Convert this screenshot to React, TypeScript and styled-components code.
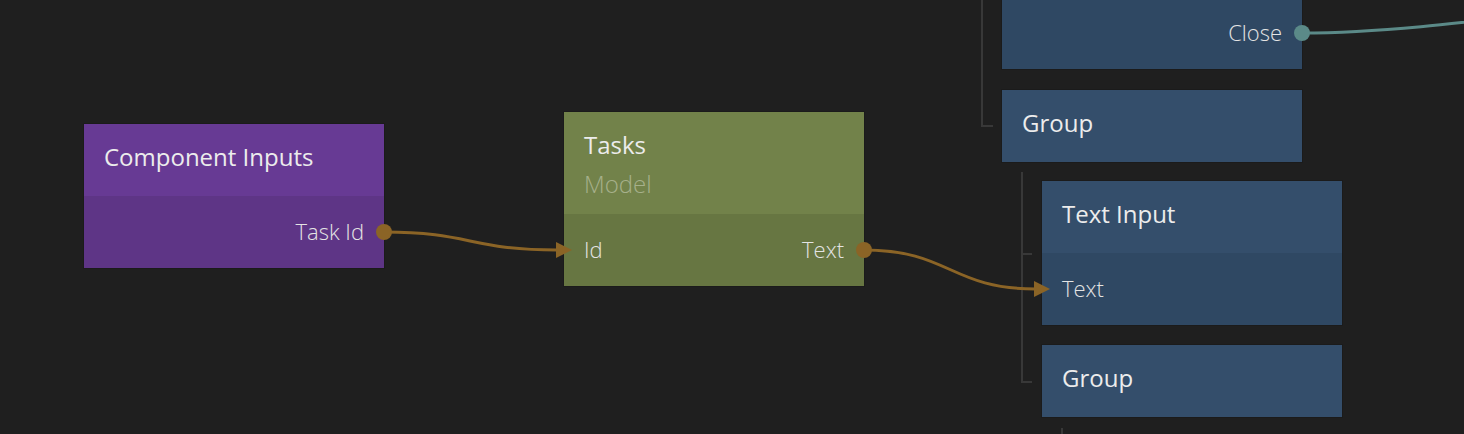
import React from "react";
import styled, { createGlobalStyle } from "styled-components";

const GlobalStyle = createGlobalStyle`
  html, body { margin: 0; padding: 0; background: #1f1f1f; }
  body { font-family: "Open Sans", "Noto Sans", sans-serif; }
`;

type Variant = "purple" | "green" | "blue";

const palette: Record<Variant, { head: string; ports: string; sub: string }> = {
  purple: { head: "#673a94", ports: "#5e3586", sub: "rgba(255,255,255,0.4)" },
  green: { head: "#72824a", ports: "#677642", sub: "#a6b08b" },
  blue: { head: "#344e6b", ports: "#2f4863", sub: "rgba(255,255,255,0.4)" },
};

const Canvas = styled.div`
  position: relative;
  width: 1464px;
  height: 434px;
  overflow: hidden;
  background: #1f1f1f;
`;

const NodeBox = styled.div<{ $x: number; $y: number; $variant: Variant }>`
  position: absolute;
  left: ${(p) => p.$x}px;
  top: ${(p) => p.$y}px;
  width: 300px;
  display: flex;
  flex-direction: column;
  background: ${(p) => palette[p.$variant].head};
  box-shadow: 0 0 0 1px rgba(0, 0, 0, 0.12);
`;

const Header = styled.div<{ $variant: Variant; $sub: boolean }>`
  display: flex;
  flex-direction: column;
  padding: ${(p) => (p.$sub ? "18px 20px 15px" : "18px 20px 24px")};
  background: ${(p) => palette[p.$variant].head};
`;

const Title = styled.div`
  font-size: 24px;
  line-height: 30px;
  color: #ececec;
  white-space: nowrap;
`;

const Subtitle = styled.div<{ $variant: Variant }>`
  font-size: 24px;
  line-height: 30px;
  margin-top: 9px;
  font-weight: 300;
  color: ${(p) => palette[p.$variant].sub};
`;

const Ports = styled.div<{ $variant: Variant }>`
  display: flex;
  flex-direction: column;
  padding: 20px 20px 22px;
  background: ${(p) => palette[p.$variant].ports};
`;

const PortRow = styled.div`
  display: flex;
  align-items: center;
  justify-content: space-between;
  height: 30px;
`;

const PortLabel = styled.span<{ $side: "left" | "right" }>`
  font-size: 22px;
  font-weight: 300;
  line-height: 30px;
  color: #e4e4e4;
  margin-left: ${(p) => (p.$side === "right" ? "auto" : "0")};
`;

type Row = { left?: string; right?: string };

type NodeProps = {
  x: number;
  y: number;
  variant: Variant;
  title?: string;
  subtitle?: string;
  rows?: Row[];
};

function Node({ x, y, variant, title, subtitle, rows }: NodeProps) {
  return (
    <NodeBox $x={x} $y={y} $variant={variant}>
      {title && (
        <Header $variant={variant} $sub={!!subtitle}>
          <Title>{title}</Title>
          {subtitle && <Subtitle $variant={variant}>{subtitle}</Subtitle>}
        </Header>
      )}
      {rows && rows.length > 0 && (
        <Ports $variant={variant}>
          {rows.map((r, i) => (
            <PortRow key={i}>
              {r.left && <PortLabel $side="left">{r.left}</PortLabel>}
              {r.right && <PortLabel $side="right">{r.right}</PortLabel>}
            </PortRow>
          ))}
        </Ports>
      )}
    </NodeBox>
  );
}

const Overlay = styled.svg`
  position: absolute;
  left: 0;
  top: 0;
  pointer-events: none;
`;

const Underlay = styled.svg`
  position: absolute;
  left: 0;
  top: 0;
  pointer-events: none;
`;

const WIRE = "#8b6426";
const TEAL = "#5b8a88";
const TREE = "#383838";

function Arrow({ x, y, color }: { x: number; y: number; color: string }) {
  return <polygon points={`${x - 16},${y - 8} ${x - 16},${y + 8} ${x},${y}`} fill={color} />;
}

export default function App() {
  return (
    <>
      <GlobalStyle />
      <Canvas>
        <Underlay width={1464} height={434}>
          <g stroke={TREE} strokeWidth={2} fill="none">
            <path d="M982,0 V126 H993" />
            <path d="M1022,172 V382 H1032" />
            <path d="M1022,254 H1032" />
            <path d="M1062,428 V434" />
          </g>
        </Underlay>

        <Node x={84} y={124} variant="purple" title="Component Inputs" rows={[{ right: "Task Id" }]} />
        <Node x={564} y={112} variant="green" title="Tasks" subtitle="Model" rows={[{ left: "Id", right: "Text" }]} />
        <Node x={1002} y={-3} variant="blue" rows={[{ right: "Close" }]} />
        <Node x={1002} y={90} variant="blue" title="Group" />
        <Node x={1042} y={181} variant="blue" title="Text Input" rows={[{ left: "Text" }]} />
        <Node x={1042} y={345} variant="blue" title="Group" />

        <Overlay width={1464} height={434}>
          <g fill="none" strokeWidth={3} strokeLinecap="round">
            <path d="M384,232 C470,232 470,250 557,250" stroke={WIRE} />
            <path d="M864,250 C950,250 950,289 1036,289" stroke={WIRE} />
            <path d="M1302,33 C1410,33 1540,12 1700,-4" stroke={TEAL} />
          </g>
          <Arrow x={572} y={250} color={WIRE} />
          <Arrow x={1050} y={289} color={WIRE} />
          <circle cx={384} cy={232} r={8} fill={WIRE} />
          <circle cx={864} cy={250} r={8} fill={WIRE} />
          <circle cx={1302} cy={33} r={8} fill={TEAL} />
        </Overlay>
      </Canvas>
    </>
  );
}
